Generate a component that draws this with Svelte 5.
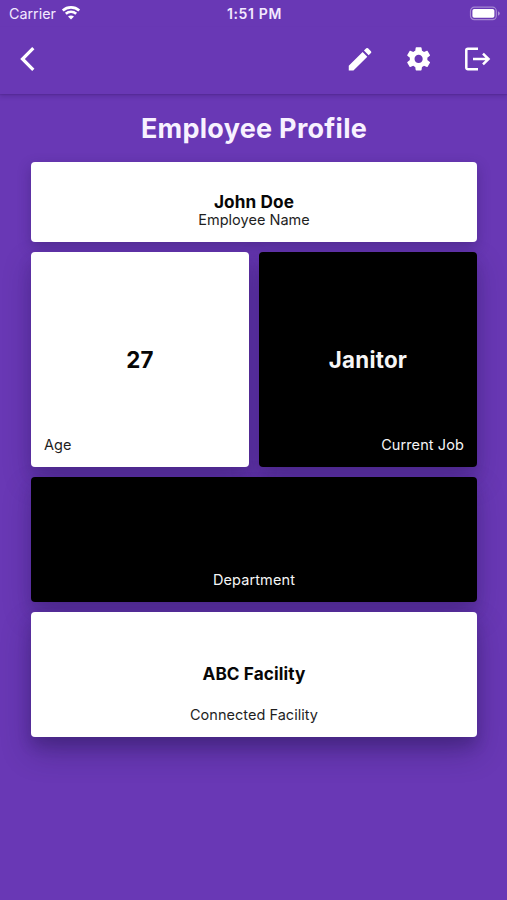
<script>
  const person = { name: 'John Doe', age: 27, job: 'Janitor', facility: 'ABC Facility' };
</script>

<div class="screen">
  <div class="status">
    <div class="carrier">
      <span>Carrier</span>
      <svg width="18" height="14" viewBox="0 0 18 14" fill="none" stroke="#fff" stroke-width="2.6">
        <path d="M.8 4.500C5.300.3 12.700.3 17.200 4.500" />
        <path d="M3.800 7.800C6.800 5.100 11.200 5.100 14.200 7.800" />
        <path d="M9 13.500 6 10.500Q9 8.300 12 10.500Z" fill="#fff" stroke="none" />
      </svg>
    </div>
    <span class="time">1:51 PM</span>
    <svg class="battery" width="32" height="16" viewBox="0 0 32 16">
      <rect x="1.500" y="1.200" width="25.800" height="12.400" rx="3.800" fill="none" stroke="#fff" stroke-opacity=".4" stroke-width="1.200" />
      <rect x="3.400" y="3" width="22" height="8.800" rx="1.800" fill="#fff" />
      <path d="M29 5.300Q30.800 6 30.800 7.500T29 9.700Z" fill="#fff" opacity=".45" />
    </svg>
  </div>

  <header>
    <button aria-label="Back">
      <svg class="line back" width="32" height="32" viewBox="0 0 32 32"><path d="M21.300 5.200 10.500 16l10.800 10.800" /></svg>
    </button>
    <div class="actions">
      <button aria-label="Edit">
        <svg width="32" height="32" viewBox="0 0 24 24"><path d="M3 17.250V21h3.750L17.810 9.940l-3.750-3.750L3 17.250zM20.710 7.040a1 1 0 0 0 0-1.410l-2.340-2.340a1 1 0 0 0-1.410 0l-1.830 1.830 3.750 3.750 1.830-1.830z" transform="translate(1.500 .900) scale(.94)" /></svg>
      </button>
      <button aria-label="Settings">
        <svg width="32" height="32" viewBox="0 0 24 24"><path d="M19.430 12.980c.04-.32.070-.64.070-.98s-.03-.66-.07-.98l2.110-1.650c.19-.15.24-.42.120-.64l-2-3.460c-.12-.22-.39-.3-.61-.22l-2.490 1c-.52-.4-1.080-.73-1.690-.98l-.38-2.650A.488.488 0 0 0 14 2h-4c-.25 0-.46.180-.49.420l-.38 2.650c-.61.250-1.170.590-1.690.980l-2.490-1c-.23-.09-.49 0-.61.220l-2 3.460c-.13.220-.07.490.120.640l2.110 1.650c-.04.320-.07.650-.07.980s.03.660.070.980l-2.110 1.650c-.19.150-.24.420-.12.640l2 3.460c.12.220.39.300.61.220l2.490-1c.52.400 1.080.730 1.690.980l.38 2.650c.03.240.24.420.49.420h4c.25 0 .46-.18.490-.42l.38-2.650c.61-.25 1.170-.59 1.690-.98l2.490 1c.23.090.49 0 .61-.22l2-3.460c.12-.22.070-.49-.12-.64l-2.110-1.650zM12 15.500c-1.930 0-3.500-1.570-3.500-3.500s1.570-3.500 3.500-3.500 3.500 1.570 3.500 3.500-1.570 3.500-3.500 3.500z" transform="translate(1.900 1.350) scale(.88)" /></svg>
      </button>
      <button aria-label="Log out">
        <svg class="line" width="32" height="32" viewBox="0 0 32 32"><path d="M17 5.700H6.900a1.600 1.600 0 0 0-1.600 1.600v17.400a1.600 1.600 0 0 0 1.600 1.600H17M12 16H27.500M22 10.600l5.500 5.400-5.500 5.400" /></svg>
      </button>
    </div>
  </header>

  <main>
    <h1>Employee Profile</h1>
    <div class="grid">
      <section class="card name">
        <strong>{person.name}</strong>
        <span class="label">Employee Name</span>
      </section>
      <section class="card square age">
        <strong>{person.age}</strong>
        <span class="label">Age</span>
      </section>
      <section class="card square dark job">
        <strong>{person.job}</strong>
        <span class="label">Current Job</span>
      </section>
      <section class="card wide dark department">
        <span class="label">Department</span>
      </section>
      <section class="card wide facility">
        <strong>{person.facility}</strong>
        <span class="label">Connected Facility</span>
      </section>
    </div>
  </main>
</div>

<style>
  :global(body) { margin: 0; background: #6938b5; }
  .screen {
    width: 507px; height: 900px; overflow: hidden; isolation: isolate;
    background: #6938b5; color: #fff; font-family: Inter, "Liberation Sans", sans-serif;
  }
  .status {
    height: 27px; box-sizing: border-box; padding: 0 7px 0 9px;
    display: grid; grid-template-columns: 1fr auto 1fr; align-items: center;
    font-size: 14.300px; color: #f3e9ff;
  }
  .carrier { display: flex; align-items: center; gap: 6px; }
  .carrier svg { margin-top: -2px; }
  .time { font-weight: 600; font-size: 14px; letter-spacing: .65px; }
  .battery { justify-self: end; margin-right: -1px; }
  header {
    height: 67px; box-sizing: border-box; padding: 0 14px 3px 12px;
    display: flex; align-items: center; justify-content: space-between;
    box-shadow: 0 1px 1px rgba(30, 10, 70, .12), 0 3px 4px rgba(30, 10, 70, .15);
  }
  .actions { display: flex; gap: 27px; }
  button { border: 0; padding: 0; background: none; display: flex; }
  button svg { fill: #fff; }
  button svg.line { fill: none; stroke: #fff; stroke-width: 2.500; }
  button svg.back { stroke-width: 3.200; }
  main { padding: 0 30px 0 31px; }
  h1 { margin: 0; height: 68px; line-height: 69px; text-align: center; font-size: 27px; letter-spacing: .27px; font-weight: 700; color: #f8f1ff; }
  .grid {
    display: grid; grid-template-columns: 1fr 1fr; gap: 9.500px 10px;
    grid-template-rows: 80px 215.500px 125.500px 125.500px;
  }
  .card {
    position: relative; box-sizing: border-box; border-radius: 4px; background: #fff; color: #070707;
    display: flex; flex-direction: column; align-items: center;
  }
  .card::before {
    content: ""; position: absolute; inset: 0; z-index: -1; border-radius: 4px;
    box-shadow: 0 8px 14px rgba(25, 15, 65, .15), 0 13px 28px rgba(25, 15, 65, .25);
  }
  .name::before { box-shadow: 0 5px 14px rgba(25, 15, 65, .3); }
  .facility::before { box-shadow: 0 8px 14px rgba(25, 15, 65, .2), 0 15px 30px rgba(25, 15, 65, .32); }
  .name, .wide { grid-column: 1 / -1; }
  .dark { background: #000; color: #f6f6f6; }
  .label { font-size: 14.500px; line-height: 18px; letter-spacing: .03px; opacity: .9; }
  .dark .label { opacity: 1; letter-spacing: .1px; }
  strong { font-size: 17.200px; line-height: 20px; letter-spacing: .1px; font-weight: 700; }
  .name { padding-top: 30px; }
  .name .label { line-height: 16px; }
  .square { display: grid; grid-template-rows: 1fr auto 1fr; padding: 1px 13px 0; align-items: stretch; }
  .square strong { grid-row: 2; text-align: center; font-size: 22.300px; line-height: 28px; letter-spacing: .25px; }
  .square .label { grid-row: 3; align-self: end; margin-bottom: 13px; }
  .job .label { text-align: right; }
  .wide { justify-content: flex-end; padding-bottom: 13.500px; }
  .facility strong { margin-bottom: 21.500px; }
</style>
